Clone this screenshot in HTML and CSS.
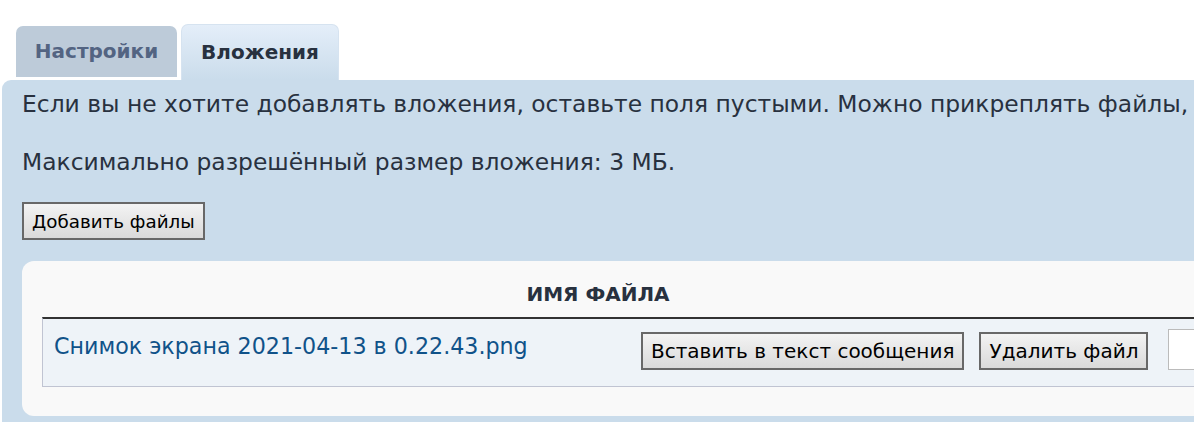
FILE: index.html
```html
<!DOCTYPE html>
<html lang="ru">
<head>
<meta charset="utf-8">
<title>Вложения</title>
<link rel="stylesheet" href="styles.css">
</head>
<body>
<div class="page">
  <ul class="tabs">
    <li class="tab">Настройки</li>
    <li class="tab tab-active">Вложения</li>
  </ul>
  <div class="panel">
    <p class="note note-first">Если вы не хотите добавлять вложения, оставьте поля пустыми. Можно прикреплять файлы,</p>
    <p class="note">Максимально разрешённый размер вложения: 3 МБ.</p>
    <button class="btn btn-add" type="button">Добавить файлы</button>
    <div class="inner">
      <div class="thead">ИМЯ ФАЙЛА</div>
      <div class="row">
        <div class="cell-name"><a class="file-link" href="#">Снимок экрана 2021-04-13 в 0.22.43.png</a></div>
        <div class="cell-actions">
          <button class="btn btn-row" type="button">Вставить в текст сообщения</button>
          <button class="btn btn-row" type="button">Удалить файл</button>
          <input class="comment" type="text">
        </div>
      </div>
    </div>
  </div>
</div>
</body>
</html>
```
FILE: styles.css
```css
html, body {
  margin: 0;
  padding: 0;
  background: #ffffff;
  overflow: hidden;
}
body {
  font-family: "DejaVu Sans", Verdana, sans-serif;
  color: #28313f;
}
.page {
  width: 1500px;
  padding-left: 2px;
  padding-top: 24px;
}
.tabs {
  list-style: none;
  margin: 0;
  padding: 0 0 0 14px;
  display: flex;
  align-items: flex-end;
  gap: 4px;
}
.tab {
  box-sizing: border-box;
  width: 161px;
  height: 51px;
  margin-bottom: 3px;
  background: #bdcbd9;
  color: #536482;
  border-radius: 7px 7px 0 0;
  font-weight: bold;
  font-size: 20px;
  line-height: 51px;
  text-align: center;
}
.tab-active {
  width: 158px;
  height: 56px;
  margin-bottom: 0;
  background: linear-gradient(#e4eef9, #cadceb);
  border: 1px solid #d6e3f0;
  border-bottom: none;
  color: #28313f;
  line-height: 54px;
}
.panel {
  background: #cadceb;
  border-radius: 9px 0 0 0;
  padding: 10px 0 7px 20px;
}
.note {
  margin: 0;
  font-size: 23.4px;
  line-height: 28px;
  white-space: nowrap;
}
.note-first {
  margin-bottom: 30px;
}
.btn {
  box-sizing: border-box;
  height: 38px;
  padding: 0 8px;
  border: 2px solid #686868;
  background: linear-gradient(#f3f3f3, #dadada);
  color: #000;
  font-family: "DejaVu Sans", sans-serif;
  font-size: 20px;
  white-space: nowrap;
  border-radius: 0;
  cursor: pointer;
}
.btn-add {
  display: block;
  margin-top: 26px;
  font-size: 18.3px;
  padding: 0 8px;
}
.inner {
  margin-top: 21px;
  background: #f9f9f9;
  border-radius: 12px;
  padding: 0 0 29px 20px;
}
.thead {
  width: 1112px;
  padding: 21px 0 11px;
  font-size: 20px;
  line-height: 24px;
  font-weight: bold;
  text-align: center;
  color: #28313f;
}
.row {
  display: flex;
  align-items: flex-start;
  background: #eef3f8;
  border-top: 2px solid #333333;
  border-left: 1px solid #c0c4d2;
  border-bottom: 1px solid #c0c4d2;
  height: 67px;
}
.cell-name {
  width: 587px;
  padding: 14px 0 0 11px;
  font-size: 22.2px;
  line-height: 26px;
}
.file-link {
  color: #105289;
  text-decoration: none;
}
.cell-actions {
  display: flex;
  align-items: flex-start;
  padding-top: 10px;
}
.btn-row {
  margin-top: 3px;
  margin-right: 15px;
}
.btn-row:nth-child(2) {
  margin-right: 20px;
}
.comment {
  box-sizing: border-box;
  width: 200px;
  height: 41px;
  border: 1px solid #bbbbbb;
  background: #fff;
  margin: 0;
}
```
